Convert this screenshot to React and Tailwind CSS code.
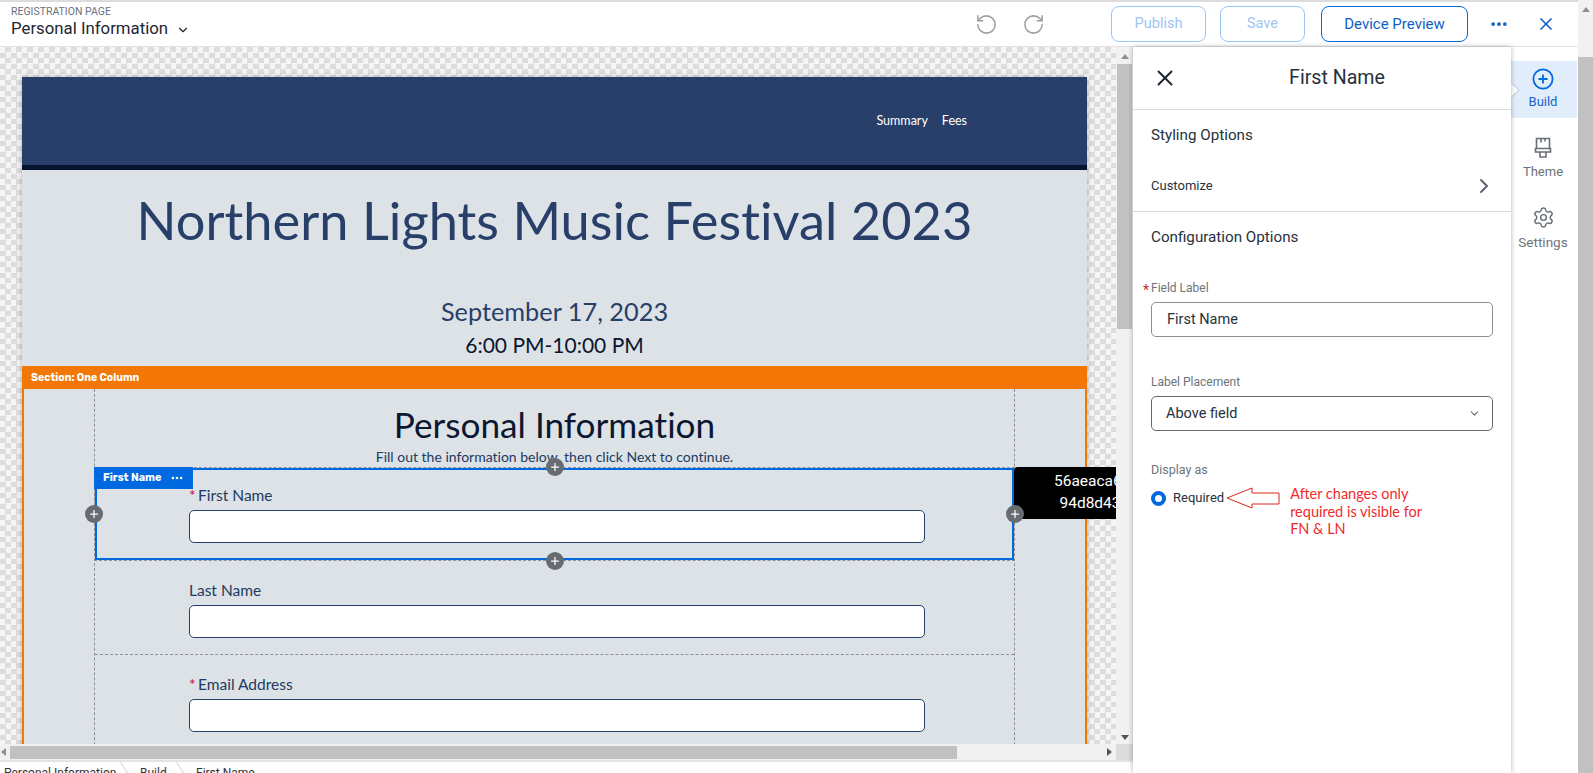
import { useState } from "react";
import { ChevronDown, ChevronRight, Ellipsis, Plus, RotateCcw, RotateCw, Settings, X } from "lucide-react";

const pageFont = { fontFamily: "Lato, 'Noto Sans', sans-serif" };

function Field({ label, required }) {
  return (
    <div className="pl-[94px] pr-[89px]">
      <label className="block h-[22px] text-[15.5px] leading-[22px] text-[#213a62]" style={pageFont}>
        {required && <span className="inline-block w-[9px] text-[#c8102e]">*</span>}
        {label}
      </label>
      <input
        readOnly
        className="mt-[4px] block h-[33px] w-full rounded-[5px] border border-[#27406b] bg-white"
      />
    </div>
  );
}

function AddDot({ className }) {
  return (
    <span
      className={`absolute z-10 flex size-[18px] items-center justify-center rounded-full bg-[#676c73] text-white ${className}`}
    >
      <Plus size={12} strokeWidth={2.5} />
    </span>
  );
}

function VScrollArrow({ up }) {
  return (
    <span
      className={
        up
          ? "block h-0 w-0 border-x-[4px] border-b-[5px] border-x-transparent border-b-[#8f8f8f]"
          : "block h-0 w-0 border-x-[4px] border-t-[5px] border-x-transparent border-t-[#555]"
      }
    />
  );
}

function Canvas() {
  return (
    <div className="h-full w-[1116px] overflow-hidden bg-[conic-gradient(#dddddd_25%,#f5f5f5_0_50%,#dddddd_0_75%,#f5f5f5_0)] bg-[length:11px_11px] pl-[22px] pt-[30px] [font-variant-ligatures:none]">
      <div className="w-[1065px] bg-[#dde2e6] shadow-[0_0_6px_rgba(0,0,0,0.25)]">
        <div className="flex h-[88px] items-center justify-end gap-[14px] bg-[#283f69] pr-[120px] pt-[1px] text-[12.5px] text-white" style={pageFont}>
          <span>Summary</span>
          <span>Fees</span>
        </div>
        <div className="h-[5px] bg-[#06142f]" />
        <div className="text-center" style={pageFont}>
          <h1 className="pt-[20px] text-[52.4px] leading-[60px] text-[#283f69]">
            Northern Lights Music Festival 2023
          </h1>
          <p className="pt-[44px] text-[25.3px] leading-[34px] text-[#283f69]">September 17, 2023</p>
          <p className="mt-[2px] h-[36px] text-[21px] leading-[30px] text-[#0b1730]">6:00 PM-10:00 PM</p>
        </div>
        <div className="flex h-[23px] items-center bg-[#f27707] pl-[9px] text-[10.5px] font-bold text-white" style={{ fontFamily: "Rubik, Roboto, sans-serif" }}>
          Section: One Column
        </div>
        <div className="flex border-x-2 border-[#f27707] pr-[70px] pl-[70px]">
          <div className="relative w-[921px] border-x border-dashed border-[#8d9298]">
            <div className="h-[79px] pt-[18px] text-center" style={pageFont}>
              <h2 className="text-[35.2px] leading-[34px] text-[#0b1730]">Personal Information</h2>
              <p className="pt-[6px] text-[14px] leading-[20px] text-[#213a62]">
                Fill out the information below, then click Next to continue.
              </p>
            </div>
            <div className="relative h-[92px] border-2 border-[#0069e0] pt-[14px] outline-1 outline-dashed outline-[#8d9298]">
              <div className="absolute -left-[3px] -top-[3px] flex h-[22px] w-[99px] items-center justify-between bg-[#0069e0] pl-[9px] pr-[9px] text-[10.8px] font-bold text-white" style={{ fontFamily: "Rubik, Roboto, sans-serif" }}>
                First Name
                <Ellipsis size={14} strokeWidth={2.5} />
              </div>
              <AddDot className="-left-[12px] top-[35px]" />
              <AddDot className="-right-[12px] top-[35px]" />
              <AddDot className="left-[449px] -top-[12px]" />
              <AddDot className="bottom-[-12px] left-[449px]" />
              <div className="-mx-[2px]">
                <Field label="First Name" required />
              </div>
              <div className="absolute left-full -top-[3px] ml-[2px] h-[52px] w-[152px] rounded-tl-[4px] bg-black pt-[3px] text-center text-[15.5px] leading-[22px] text-white" style={{ fontFamily: "Roboto, sans-serif" }}>
                56aeaca6-
                <br />
                94d8d43
              </div>
            </div>
            <div className="h-[95px] border-b border-dashed border-[#8d9298] pt-[19px]">
              <Field label="Last Name" />
            </div>
            <div className="h-[100px] pt-[18px]">
              <Field label="Email Address" required />
            </div>
          </div>
        </div>
      </div>
    </div>
  );
}

function Crumb() {
  return (
    <svg width="8" height="11" viewBox="0 0 8 11" className="shrink-0" fill="none" stroke="#cfcfcf">
      <path d="M0.5 0.5 L7.5 11" />
    </svg>
  );
}

function Breadcrumbs() {
  return (
    <div className="flex h-[11px] overflow-hidden pl-[4px] text-[12px] leading-[22px] text-[#333]">
      <span className="w-[116px] shrink-0 whitespace-nowrap">Personal Information</span>
      <Crumb />
      <span className="ml-[12px] w-[36px] shrink-0 whitespace-nowrap">Build</span>
      <Crumb />
      <span className="ml-[12px] whitespace-nowrap">First Name</span>
    </div>
  );
}

function TopBar() {
  return (
    <header className="flex h-[47px] items-center border-b border-t-2 border-b-[#e3e3e3] border-t-[#dcdcdc] bg-white">
      <div className="-mt-[4px] pl-[11px]">
        <p className="text-[10.5px] leading-[12px] text-[#6b7280]">REGISTRATION PAGE</p>
        <p className="flex items-center text-[16.8px] leading-[20px] text-[#1d2733]">
          Personal Information
          <ChevronDown size={14} className="ml-[8px] mt-[3px]" />
        </p>
      </div>
      <div className="ml-auto flex items-center pr-[22px]">
        <RotateCcw size={23} strokeWidth={1.6} className="mr-[24px] text-[#9a9ea3]" />
        <RotateCw size={23} strokeWidth={1.6} className="mr-[66px] text-[#9a9ea3]" />
        <button className="h-[36px] w-[95px] rounded-[8px] border border-[#9cc6f5] text-[14.5px] text-[#9cc6f5]">Publish</button>
        <button className="ml-[14px] h-[36px] w-[85px] rounded-[8px] border border-[#9cc6f5] text-[14.5px] text-[#9cc6f5]">Save</button>
        <button className="ml-[16px] h-[36px] w-[147px] rounded-[8px] border border-[#0069e0] text-[15px] text-[#0f5fc4]">Device Preview</button>
        <Ellipsis size={20} strokeWidth={2.5} className="ml-[21px] text-[#0f5fc4]" />
        <X size={20} strokeWidth={2} className="ml-[27px] text-[#0f5fc4]" />
      </div>
    </header>
  );
}

function Panel() {
  const [placement, setPlacement] = useState("Above field");
  return (
    <aside className="relative z-10 w-[378px] shrink-0 bg-white shadow-[0_0_5px_rgba(0,0,0,0.3)]">
      <div className="flex h-[63px] items-center border-b border-[#d9dbde] pl-[19px]">
        <X size={26} strokeWidth={1.8} className="shrink-0 text-[#1d2733]" />
        <h3 className="ml-[101px] w-[116px] shrink-0 text-center text-[19.6px] text-[#27313d]">First Name</h3>
      </div>
      <div className="pl-[18px] pr-[18px]">
        <h4 className="pt-[14px] text-[15.2px] leading-[22px] text-[#27313d]">Styling Options</h4>
        <div className="mt-[28px] flex h-[24px] items-center justify-between text-[13px] text-[#27313d]">
          Customize
          <ChevronRight size={24} strokeWidth={2} className="-mr-[3px] text-[#5f6670]" />
        </div>
      </div>
      <div className="mt-[13px] border-b border-[#d9dbde]" />
      <div className="pl-[18px] pr-[18px]">
        <h4 className="pt-[14px] text-[15.2px] leading-[22px] text-[#27313d]">Configuration Options</h4>
        <label className="relative mt-[32px] block text-[12px] leading-[16px] text-[#6d737b]">
          <span className="absolute -left-[8px] top-[2px] text-[14px] text-[#d9261c]">*</span>
          Field Label
        </label>
        <input
          readOnly
          value="First Name"
          className="mt-[6px] block h-[35px] w-[342px] rounded-[5px] border border-[#8a8f96] pl-[15px] text-[14.5px] text-[#27313d] outline-none"
        />
        <label className="mt-[37px] block text-[12px] leading-[16px] text-[#6d737b]">Label Placement</label>
        <div className="relative mt-[6px] w-[342px]">
          <select
            value={placement}
            onChange={(e) => setPlacement(e.target.value)}
            className="block h-[35px] w-full appearance-none rounded-[5px] border border-[#646a72] bg-white pl-[14px] text-[14.5px] text-[#27313d] outline-none"
          >
            <option>Above field</option>
            <option>Left of field</option>
          </select>
          <ChevronDown size={13} className="pointer-events-none absolute right-[12px] top-[11px] text-[#5f6670]" />
        </div>
        <p className="mt-[31px] text-[12.5px] leading-[16px] text-[#6d737b]">Display as</p>
        <div className="mt-[9px] flex items-start">
          <span className="mt-[4px] size-[15px] shrink-0 rounded-full border-[4px] border-[#0069e0] bg-white" />
          <span className="ml-[7px] text-[13px] leading-[22px] text-[#27313d]">Required</span>
          <svg width="54" height="22" viewBox="0 0 54 22" className="ml-[2px] shrink-0">
            <path d="M1 11 L26 1 V6 H53 V17 H26 V21 Z" fill="white" stroke="#d9261c" strokeWidth="1" />
          </svg>
          <p className="-mt-[2px] ml-[10px] whitespace-nowrap text-[14.5px] leading-[17.6px] text-[#ef2b2d]" style={{ fontFamily: "Lato, sans-serif" }}>
            After changes only
            <br />
            required is visible for
            <br />
            FN &amp; LN
          </p>
        </div>
      </div>
    </aside>
  );
}

function Rail() {
  return (
    <nav className="w-[67px] shrink-0 pt-[14px] pr-[1px] text-center text-[13px] text-[#6d737b]">
      <div className="relative flex h-[57px] flex-col items-center bg-[#e1edfb] pr-[2px] pt-[7px] text-[#1a63cc]">
        <span className="absolute -left-[5px] top-[24px] size-[10px] rotate-45 bg-white shadow-[1px_-1px_1px_rgba(0,0,0,0.15)]" />
        <svg width="22" height="22" viewBox="0 0 22 22" fill="none" stroke="#0069e0" strokeWidth="1.8">
          <circle cx="11" cy="11" r="9.6" />
          <path d="M11 6.5v9M6.5 11h9" />
        </svg>
        <span className="mt-[4px] leading-[16px]">Build</span>
      </div>
      <div className="mt-[19px] flex flex-col items-center pr-[2px]">
        <svg width="20" height="22" viewBox="0 0 20 22" fill="none" stroke="#686e76" strokeWidth="1.6">
          <path d="M3.5 1.5h13v10h-13zM2.5 11.5h15v3.5h-15zM7 15v5h6v-5M8 1.5v4M12 1.5v3" />
        </svg>
        <span className="mt-[5px] leading-[16px]">Theme</span>
      </div>
      <div className="mt-[26px] flex flex-col items-center pr-[2px]">
        <Settings size={23} strokeWidth={1.5} className="text-[#686e76]" />
        <span className="mt-[5px] text-[13.5px] leading-[16px]">Settings</span>
      </div>
    </nav>
  );
}

export default function App() {
  return (
    <div className="flex h-[773px] w-[1593px] overflow-hidden bg-white" style={{ fontFamily: "Roboto, sans-serif" }}>
      <div className="flex min-w-0 flex-1 flex-col">
        <TopBar />
        <div className="flex min-h-0 flex-1">
          <div className="flex w-[1133px] shrink-0 flex-col">
            <div className="flex h-[697px]">
              <Canvas />
              <div className="flex w-[17px] flex-col items-center bg-[#f1f1f1] pt-[7px]">
                <VScrollArrow up />
                <div className="mt-[5px] h-[265px] w-[15px] bg-[#c1c1c1]" />
                <div className="mt-auto mb-[4px]">
                  <VScrollArrow />
                </div>
              </div>
            </div>
            <div className="flex h-[18px] items-center border-b-2 border-[#e4e4e4] bg-[#f1f1f1]">
              <span className="ml-[1px] h-0 w-0 border-y-[4px] border-r-[5px] border-y-transparent border-r-[#8f8f8f]" />
              <div className="ml-[4px] h-[13px] w-[947px] bg-[#c1c1c1]" />
              <span className="ml-[150px] h-0 w-0 border-y-[4px] border-l-[5px] border-y-transparent border-l-[#555]" />
              <div className="ml-auto h-full w-[17px] bg-[#dcdcdc]" />
            </div>
            <Breadcrumbs />
          </div>
          <Panel />
          <Rail />
        </div>
      </div>
      <div className="flex w-[15px] shrink-0 flex-col items-center bg-[#f1f1f1] pt-[7px]">
        <VScrollArrow up />
        <div className="mt-[45px] w-full flex-1 bg-[#c1c1c1]" />
      </div>
    </div>
  );
}
